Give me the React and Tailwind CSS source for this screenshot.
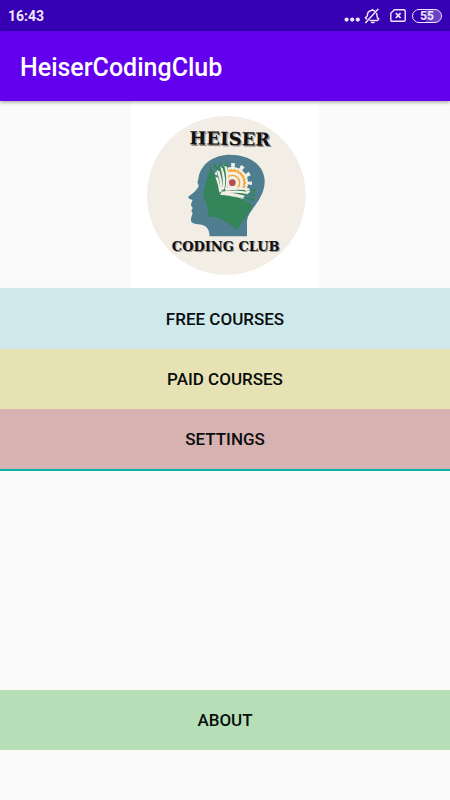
const courses = [
  { label: 'Free courses', color: 'h-[61px] bg-[#cfe8eb]' },
  { label: 'Paid courses', color: 'h-[60px] bg-[#e6e2b3]' },
  { label: 'Settings', color: 'h-[60px] bg-[#d8b2b1]' },
]

function MutedBell() {
  return (
    <svg viewBox="0 0 16 16" className="size-4" fill="none" stroke="currentColor" strokeWidth="1.5" strokeLinecap="round" strokeLinejoin="round">
      <path d="M2.6 10.8 L1.4 9.8 L3.4 7.8 C3.2 4.6 5 3 7.4 2.6 L8.2 1.6 L9.4 2.4 C10 2.5 10.4 2.7 10.8 3" />
      <path d="M12.6 5.4 C13.2 7 12.8 8.6 13.4 9.6 L14.8 11 L13.4 12.4 H6.2" />
      <path d="M7.6 14.4 H10" />
      <path d="M14 1.2 L1.8 14.6" />
    </svg>
  )
}

function NoSim() {
  return (
    <svg viewBox="0 0 16 13" className="h-[13px] w-4" fill="none" stroke="currentColor" strokeWidth="1.4" strokeLinejoin="round">
      <path d="M4.4 .8 H14 Q15.2 .8 15.2 2 V11 Q15.2 12.2 14 12.2 H2 Q.8 12.2 .8 11 V4.2 Z" />
      <path strokeWidth="1.7" d="M5.8 4.2 L10.6 9 M10.6 4.2 L5.8 9" />
    </svg>
  )
}

function StatusBar() {
  return (
    <div className="flex h-[31px] items-center justify-between bg-[#3700b3] px-2 text-[#eee6fb]">
      <span className="pt-px text-sm font-bold">16:43</span>
      <div className="flex items-center">
        <svg viewBox="0 0 16 16" className="mr-1 size-4" fill="currentColor">
          <circle cx="2.6" cy="11.6" r="2.1" />
          <circle cx="8.2" cy="11.6" r="2.1" />
          <circle cx="13.8" cy="11.6" r="2.1" />
        </svg>
        <MutedBell />
        <span className="w-[10px]" />
        <NoSim />
        <span className="ml-[6px] flex h-[14px] w-[30px] items-center justify-center rounded-full border border-current bg-linear-to-r from-[#3700b3] from-45% to-[#6a42c8] to-45% text-xs leading-none font-bold text-[#eee6fb]">
          55
        </span>
      </div>
    </div>
  )
}

function Logo() {
  return (
    <svg viewBox="3 3 564 561" className="h-[187px] w-[188px] bg-white" role="img" aria-label="Heiser Coding Club">
      <circle cx="289" cy="286" r="238" fill="#f2eee6" />

      <g fontFamily="'DejaVu Serif', serif" fontWeight="bold" textAnchor="middle">
        <g fontSize="54" transform="rotate(1 300 134)">
          <text x="303" y="139" fill="#96928c">HEISER</text>
          <text x="299" y="135" fill="#111">HEISER</text>
        </g>
        <g fontSize="39">
          <text x="290" y="457" fill="#96928c">CODING CLUB</text>
          <text x="287" y="454" fill="#111">CODING CLUB</text>
        </g>
      </g>

      {/* head */}
      <path
        fill="#4f7e90"
        d="M299 164 C252 164 217 190 207 226 C205 233 206 238 203 244 C201 251 208 253 205 260 C199 272 185 283 175 290 C173 295 182 298 187 299 C189 304 183 308 183 314 C183 319 188 321 188 325 C184 329 183 333 187 338 C190 344 181 353 183 362 C186 375 207 370 223 377 C237 385 238 397 239 409 H351 V365 C352 345 366 331 380 310 C395 287 405 266 404 240 C401 194 358 164 299 164 Z"
      />

      {/* gear and sun */}
      <circle cx="307" cy="248" r="51" fill="none" stroke="#f2eee6" strokeWidth="16" strokeDasharray="11 15.7" strokeDashoffset="5" />
      <circle cx="307" cy="248" r="47" fill="#f2eee6" />
      <circle cx="307" cy="248" r="36" fill="none" stroke="#f3a52b" strokeWidth="5" />
      <circle cx="307" cy="248" r="39" fill="none" stroke="#f3a52b" strokeWidth="4" strokeDasharray="5 6" />
      <circle cx="307" cy="248" r="22" fill="none" stroke="#f3a52b" strokeWidth="4" />
      <circle cx="307" cy="248" r="10" fill="#b84c4c" />

      {/* book */}
      <path
        fill="#34855a"
        d="M242 196 L262 245 L275 280 L300 288 L338 296 L369 317 L321 391 C297 371 268 347 237 351 C233 327 230 306 219 287 C223 258 236 229 242 196 Z"
      />
      <path fill="#34855a" d="M258 208 L288 198 C298 222 296 246 291 265 L340 266 L354 278 L340 294 L276 283 Z" />
      <g fill="none" stroke="#34855a" strokeWidth="4">
        <path d="M252 206 L256 193 L268 214 M266 205 L272 190 L282 208 M280 202 L288 190 L293 210" />
        <path d="M350 269 L375 270 L362 287 M354 282 L374 284 L361 300 M345 294 L371 299 L357 310" />
      </g>
      <g fill="#f2eee6">
        <path d="M283 198 L291 200 Q301 232 291 266 L285 268 Q293 234 283 198 Z" />
        <path d="M271 200 L278 205 Q290 236 283 268 L278 269 Q281 236 271 200 Z" />
        <path d="M260 210 L269 214 Q277 242 280 271 L272 268 Q270 240 260 210 Z" />
        <path d="M256 230 L264 234 Q268 254 276 272 L268 278 Q266 256 256 230 Z" />
        <path d="M285 264 Q315 259 357 265 L360 271 Q320 267 287 273 Z" />
        <path d="M282 274 Q320 268 357 276 L351 282 Q316 275 286 280 Z" />
        <path d="M276 274 Q315 279 345 287 L339 294 Q305 286 270 284 Z" />
      </g>
    </svg>
  )
}

function MenuButton({ label, color }) {
  return (
    <button type="button" className={`w-full pt-0.5 text-[17px] font-medium text-[#080d0d] uppercase ${color}`}>
      {label}
    </button>
  )
}

export default function App() {
  return (
    <div className="flex min-h-screen flex-col bg-[#fafafa] font-['Roboto',sans-serif]">
      <StatusBar />
      <header className="relative flex h-[70px] items-center bg-[#6200ee] px-5 pt-1 shadow-[0_1px_4px_rgba(0,0,0,0.4)]">
        <h1 className="text-[25px] font-medium text-white">HeiserCodingClub</h1>
      </header>
      <main className="flex flex-1 flex-col">
        <div className="flex justify-center">
          <Logo />
        </div>
        <nav className="border-b-2 border-[#06b5a4]">
          {courses.map((c) => (
            <MenuButton key={c.label} label={c.label} color={c.color} />
          ))}
        </nav>
        <div className="mt-auto mb-[50px]">
          <MenuButton label="About" color="h-[60px] bg-[#b6dfb7]" />
        </div>
      </main>
    </div>
  )
}
